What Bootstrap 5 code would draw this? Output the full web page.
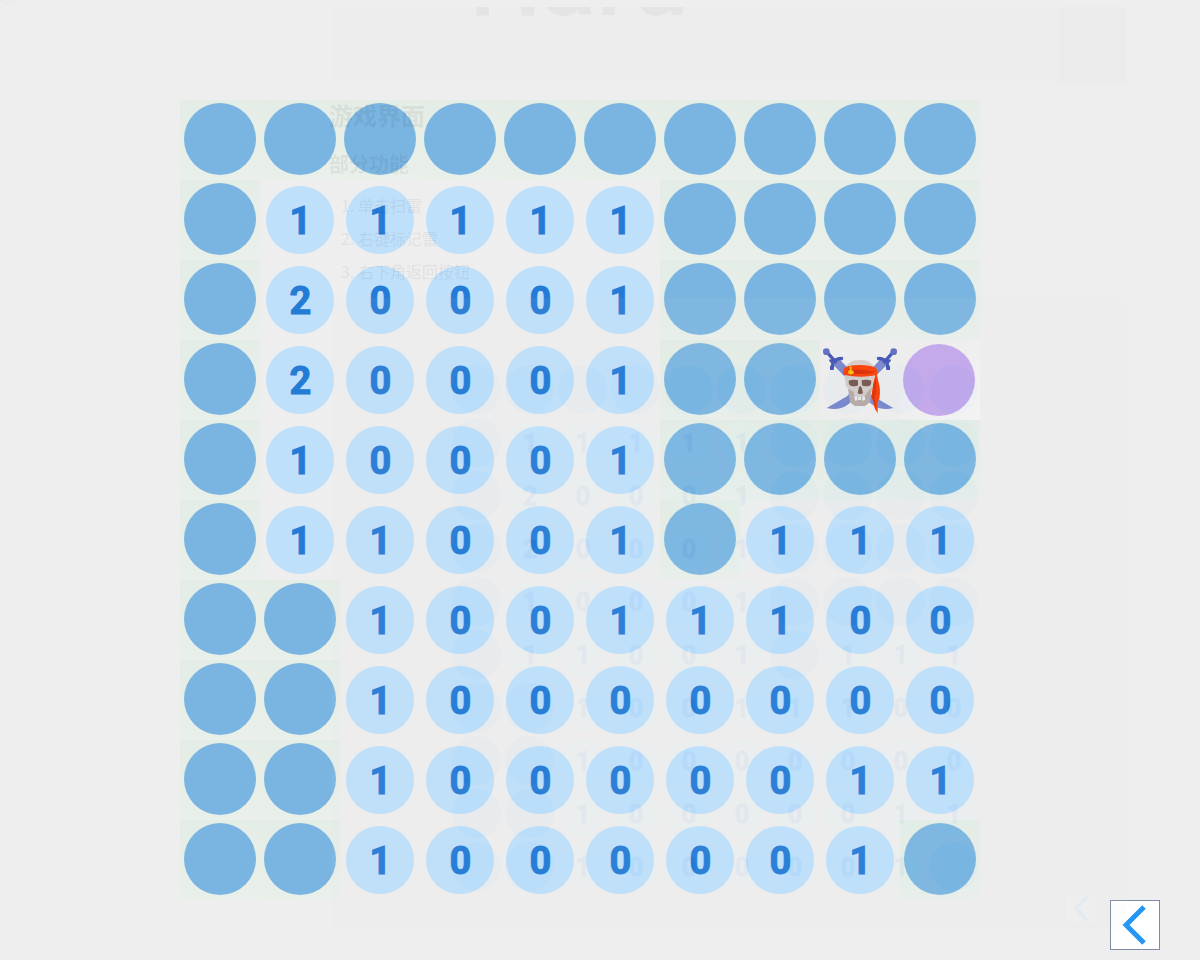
<!DOCTYPE html>
<html lang="zh-CN">
<head>
<meta charset="utf-8">
<meta name="viewport" content="width=device-width, initial-scale=1">
<title>扫雷</title>
<link href="https://cdn.jsdelivr.net/npm/bootstrap@5.3.0/dist/css/bootstrap.min.css" rel="stylesheet">
<style>
  body { background: #eee; font-family: Roboto, "Noto Sans CJK SC", sans-serif; }
  .stage { padding: 100px 40px 60px 0; }
  .mine-grid { display: grid; grid-template-columns: repeat(10, 1fr); width: 800px; max-width: 100%; }
  .cell { aspect-ratio: 1; display: flex; align-items: center; justify-content: center; padding: 0; border: 0; background: none; }
  .disc { width: 84%; aspect-ratio: 1; border-radius: 50%; background: #bfe0fb; color: #237bd6; font-size: 38px; font-weight: 700; line-height: 1; -webkit-text-stroke: 1px currentColor; padding: 1px 0 0 1px; display: flex; align-items: center; justify-content: center; }
  .cell.covered { background: linear-gradient(170deg, #e4ede5, #e9f0ea 90%, #edefee); }
  .covered .disc, .marked .disc { width: 91%; background: #7ab5e1; margin-bottom: 2px; }
  .cell.marked { background: linear-gradient(135deg, #ededee, #f6f5f6); }
  .marked .disc { background: #c3a7ec; margin: 0 2px 0 0; }
  .cell svg { width: 100%; height: 100%; }

  .back-btn { right: 40px; bottom: 10px; width: 50px; height: 50px; padding: 0; background: #fff; border: 1px solid #7d8da3; }
  .back-btn svg { display: block; width: 100%; height: 100%; }

  /* faded help page over the board */
  .guide { inset: 0; opacity: .06; overflow: hidden; pointer-events: none; color: #000; }
  .guide-mark { top: 0; left: 0; width: 16px; height: 5px; }
  .guide-page { margin: 7px 74px 0 329px; }
  .guide-banner { height: 76px; margin-left: 3px; background: #dfdfdf; overflow: hidden; }
  .guide-banner p { font-size: 102px; font-weight: 500; line-height: 100px; margin: -77px 0 0 137px; color: #444; }
  .guide-side { width: 66px; height: 76px; background: #bbb; }
  .guide h2 { font-size: 24px; line-height: 36px; font-weight: 700; margin: 16px 0; }
  .guide h3 { font-size: 20px; line-height: 28px; font-weight: 700; margin: 0 0 10px; }
  .guide ol { font-size: 16px; line-height: 33px; margin: 0 0 10px; padding: 0 0 0 12px; list-style: none; font-family: "Noto Sans CJK SC", sans-serif; }
  .guide-shot { height: 635px; margin-left: 3px; background: #dfdfdf; padding: 66px 0 0 118px; }
  .guide-shot .mine-grid { width: 530px; }
  .guide-shot .disc { font-size: 25px; }
  .guide-shot .cell.covered { background: none; }
  .guide-back { right: 28px; bottom: 8px; width: 33px; height: 33px; background: #e8e8e8; border: 1px solid #bbb; }
</style>
</head>
<body>
<main class="stage d-flex justify-content-center min-vh-100">
  <div class="mine-grid" id="board" role="group" aria-label="扫雷"></div>
</main>

<button type="button" class="back-btn position-fixed" aria-label="返回">
  <svg viewBox="0 0 48 48" fill="none" stroke="#2496f3" stroke-width="5"><path d="M33 6 15 24 33 42"/></svg>
</button>

<div class="guide position-absolute" aria-hidden="true">
  <svg class="guide-mark position-absolute" viewBox="0 0 16 5" fill="none" stroke="#777"><path d="M1 0Q2 3.500 4 3.500H13Q15 3 15 0M5 0V2M10 0V2"/></svg>
  <div class="guide-page">
    <div class="guide-banner d-flex justify-content-between"><p>Hard</p><div class="guide-side"></div></div>
    <h2>游戏界面</h2>
    <h3>部分功能</h3>
    <ol><li>1. 单击扫雷</li><li>2. 右键标记雷</li><li>3. 右下角返回按钮</li></ol>
    <div class="guide-shot position-relative">
      <div class="mine-grid" id="preview"></div>
      <div class="guide-back position-absolute"><svg class="d-block" viewBox="0 0 48 48" fill="none" stroke="#2496f3" stroke-width="5"><path d="M33 6 15 24 33 42"/></svg></div>
    </div>
  </div>
</div>

<template id="skull">
  <svg viewBox="30 15 240 240" role="img" aria-label="雷">
    <g id="sword">
      <path fill="#7986cb" d="M70 90 90 74Q144 128 189 184L250 219Q215 228 187 209Q160 188 133 153Z"/>
      <path fill="none" stroke="#3f51b5" stroke-width="10" d="M52 53 80 84"/>
      <path fill="#3f51b5" d="M56 74 72 71 86 66 97 65 100 69 98 75 86 77 74 85 71 105H60V95L64 86Z"/>
      <circle cx="49" cy="50" r="10" fill="#5c6bc0"/>
    </g>
    <use href="#sword" transform="translate(300 0) scale(-1 1)"/>
    <path fill="#d7ccc8" d="M105 104Q111 75 151 75 191 76 197 111 199 142 191 157L183 163 178 201 165 212H135L121 201 117 164 108 153Q102 130 105 104Z"/>
    <path fill="#bcaaa4" d="M114 161 130 170 135 185H164L171 171 186 158 180 202 165 213H135L120 202Z"/>
    <path fill="#efebe9" d="M133 184H142V196L135 197ZM144 185H153V195H145ZM156 185H165V195L157 197Z"/>
    <path fill="#795548" d="M116 137Q129 132 144 136V151Q139 155 124 153 116 151 116 137ZM155 136Q171 132 184 137 184 151 177 153 161 155 156 151ZM147 156 151 153 155 158 159 175 151 178 143 175Z"/>
    <path fill="#ff3d00" d="M101 105Q103 90 151 90 199 91 202 107L201 121 205 139Q213 165 208 191L203 202V234L196 224Q192 217 192 206L185 184 187 166 190 146 196 121Q151 130 99 119Z"/>
    <path fill="#dd2c00" d="M116 106Q151 99 197 111Q174 119 133 116ZM197 126Q200 153 195 189L198 221Q192 216 192 204L185 185 190 147Z"/>
    <path fill="#ffc107" d="M119 96Q122 91 125 96L124 104Q133 108 132 114 123 122 114 115 113 107 120 104Z"/>
  </svg>
</template>

<script src="https://cdn.jsdelivr.net/npm/bootstrap@5.3.0/dist/js/bootstrap.bundle.min.js"></script>
<script>
  // # covered, M mine, P marked, digit = neighbouring mines
  const rows = ['##########', '#11111####', '#20001####', '#20001##MP', '#10001####',
                '#11001#111', '##10011100', '##10000000', '##10000011', '##1000001#'];
  function fill(id, tag, preview) {
    const grid = document.getElementById(id);
    for (const ch of rows.join('')) {
      const cell = document.createElement(tag);
      cell.className = 'cell';
      if (tag === 'button') cell.type = 'button';
      if (ch === 'M' && !preview) {
        cell.append(document.getElementById('skull').content.cloneNode(true));
      } else {
        const disc = document.createElement('span');
        disc.className = 'disc';
        if (/\d/.test(ch)) disc.textContent = ch;
        else {
          cell.classList.add(ch === 'P' && !preview ? 'marked' : 'covered');
          if (tag === 'button') cell.setAttribute('aria-label', ch === 'P' ? '已标记' : '未翻开');
        }
        cell.append(disc);
      }
      grid.append(cell);
    }
  }
  fill('board', 'button', false);
  fill('preview', 'div', true);
</script>
</body>
</html>
